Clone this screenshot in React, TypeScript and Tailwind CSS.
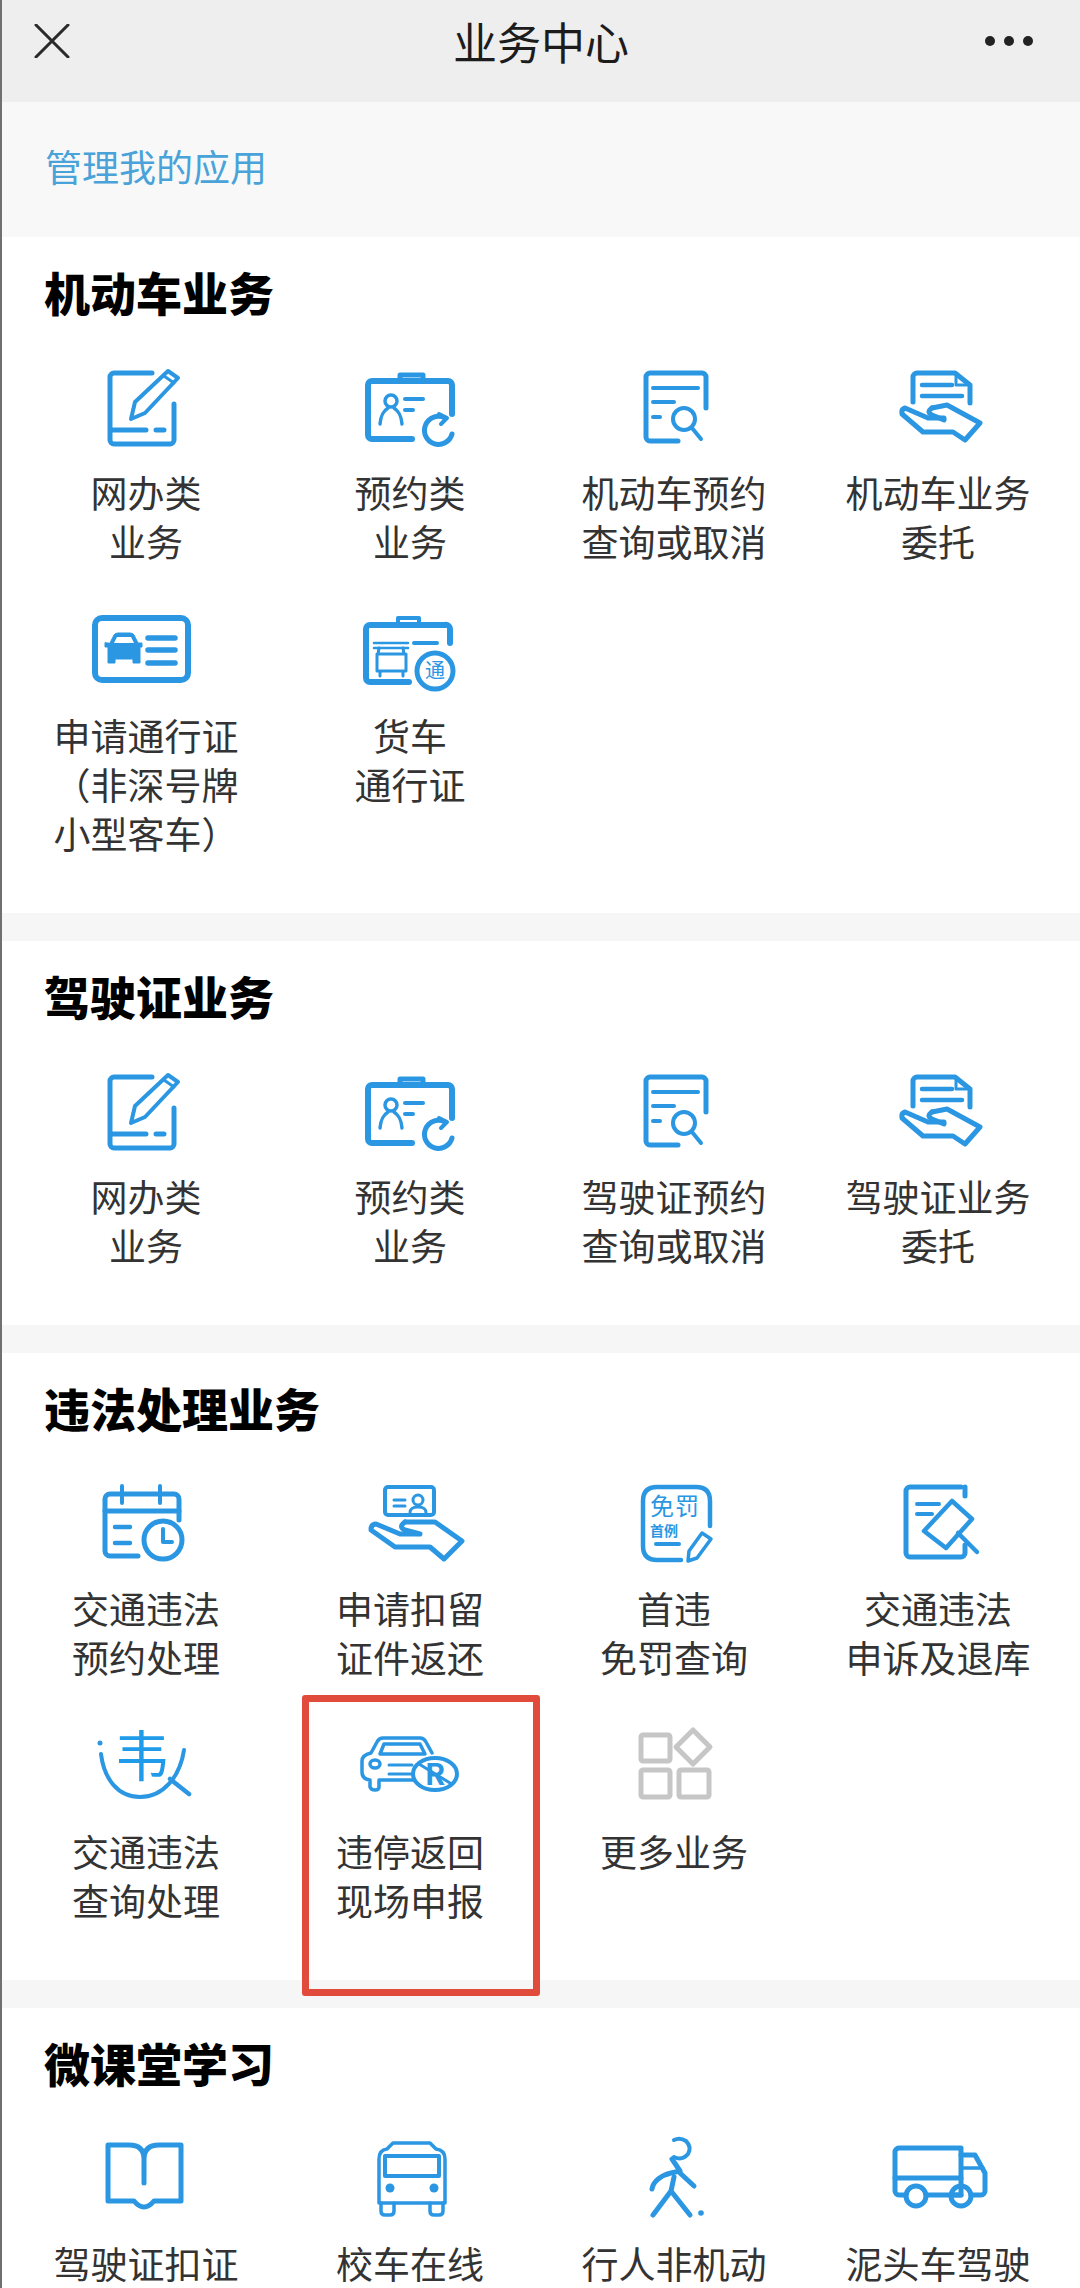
import React from "react";

const BLUE = "#2b97e3";

// shared wrapper for the service icons, all drawn on a 100 unit grid
const Ico = ({ children, color = BLUE, w = 5 }: { children: React.ReactNode; color?: string; w?: number }) => (
  <svg
    viewBox="0 0 100 100"
    className="w-[100px] h-[100px] overflow-visible"
    fill="none"
    stroke={color}
    strokeWidth={w}
    strokeLinecap="round"
    strokeLinejoin="round"
  >
    {children}
  </svg>
);

const TabletPen = () => (
  <Ico>
    <path d="M56 15H18a4 4 0 0 0-4 4V82a4 4 0 0 0 4 4H74a4 4 0 0 0 4-4V46" />
    <path d="M15 72H50M60 72H68" />
    <path d="M35 61L39 44 72 13 82 20 49 55Z" strokeWidth={4} />
    <path d="M68 18L78 25" strokeWidth={3} />
  </Ico>
);

const CardRefresh = () => (
  <Ico>
    <path d="M52 81H12a4 4 0 0 1-4-4V27a4 4 0 0 1 4-4H88a4 4 0 0 1 4 4V56" strokeWidth={6} />
    <path d="M40 20V17H63V20" strokeWidth={5} />
    <circle cx="31" cy="43" r="6" strokeWidth={3.5} />
    <path d="M20 66C21 55 25 52 28 50M42 66C41 55 37 52 34 50" strokeWidth={3.5} />
    <path d="M45 41H63M45 52H53" strokeWidth={4} />
    <path d="M85 60A14 14 0 1 0 92 76" />
    <path d="M79 56L87 60 81 66" strokeWidth={4} />
  </Ico>
);

const DocSearch = () => (
  <Ico>
    <path d="M54 83H26a4 4 0 0 1-4-4V19a4 4 0 0 1 4-4H78a4 4 0 0 1 4 4V50" />
    <path d="M29 30H74M29 44H50M29 59H36" strokeWidth={4} />
    <circle cx="60" cy="61" r="11" strokeWidth={4} />
    <path d="M68 70L77 81" strokeWidth={4} />
  </Ico>
);

const DocHand = () => (
  <Ico>
    <path d="M25 44V19a4 4 0 0 1 4-4H67L82 27V45" />
    <path d="M68 17V27H80" strokeWidth={3} />
    <path d="M34 27H64M34 38H74" strokeWidth={4.5} />
    <path d="M44 50L59 47 92 65 77 82 65 74H35L14 56Q13 51 17 50L40 60H56" />
    <path d="M44 50Q38 54 44 57L56 62" />
  </Ico>
);

const CarCard = () => (
  <Ico>
    <rect x="-1" y="17" width="93" height="62" rx="7" strokeWidth={6} />
    <path
      d="M14 42L18 34Q19 32 22 32H34Q37 32 38 34L42 42H46V46H44V62H37V58H19V62H12V46H9V42Z"
      fill={BLUE}
      strokeWidth={1}
    />
    <path d="M18 42L21 36H35L38 42Z" fill="#fff" stroke="none" />
    <path d="M52 37H79M52 49H79M52 62H79" strokeWidth={5.5} />
  </Ico>
);

const TruckPass = () => (
  <Ico>
    <path d="M49 81H10a4 4 0 0 1-4-4V28a4 4 0 0 1 4-4H85a4 4 0 0 1 5 4V42" strokeWidth={6} />
    <path d="M38 22V17H59V22" strokeWidth={4} />
    <path d="M14 42H48M14 47H48" strokeWidth={2.5} />
    <path d="M19 47L18 53H44L43 47M17 53V70H46V53M20 70V75M43 70V75" strokeWidth={3} />
    <path d="M54 42H77" strokeWidth={4} />
    <circle cx="75" cy="70" r="18" fill="#fff" strokeWidth={5} />
    <text x="75" y="77" fontSize="20" textAnchor="middle" fill={BLUE} stroke="none">
      通
    </text>
  </Ico>
);

const CalendarClock = () => (
  <Ico>
    <path d="M42 82H14a5 5 0 0 1-5-5V25a5 5 0 0 1 5-5H78a5 5 0 0 1 5 5V46" />
    <path d="M9 37H83" />
    <path d="M26 12V29M64 12V29" strokeWidth={4} />
    <path d="M19 53H34M19 69H34" strokeWidth={4.5} />
    <circle cx="67" cy="66" r="19" fill="#fff" />
    <path d="M67 55V68H76" strokeWidth={4} />
  </Ico>
);

const HandCard = () => (
  <Ico>
    <rect x="25" y="13" width="49" height="28" rx="3" strokeWidth={4} />
    <circle cx="58" cy="26" r="5" strokeWidth={3} />
    <path d="M50 39C50 34 53 33 58 33S66 34 66 39" strokeWidth={3} />
    <path d="M34 26H45M34 32H45" strokeWidth={3} />
    <path d="M45 48H75L102 67 84 85 70 73H35L11 56Q11 50 16 50L40 60H58" />
    <path d="M45 48Q38 53 45 56L60 60" />
  </Ico>
);

const FreeFine = () => (
  <Ico w={4.5}>
    <path d="M57 86H33Q19 86 19 72V27Q19 13 33 13H72Q86 13 86 27V52" />
    <path d="M32 70H55" strokeWidth={4} />
    <path d="M78 59L87 65 73 84 64 87 65 77Z" strokeWidth={3.5} />
    <text x="38" y="41" fontSize="24" textAnchor="middle" fill={BLUE} stroke="none">
      免
    </text>
    <text x="63" y="41" fontSize="24" textAnchor="middle" fill={BLUE} stroke="none">
      罚
    </text>
    <text x="40" y="62" fontSize="14" fontWeight="700" textAnchor="middle" fill={BLUE} stroke="none">
      首例
    </text>
  </Ico>
);

const DocFlag = () => (
  <Ico>
    <path d="M73 13H22a4 4 0 0 0-4 4V79a4 4 0 0 0 4 4H73a4 4 0 0 0 4-4V71" />
    <path d="M77 13V22" />
    <path d="M29 30H51M29 40H44" strokeWidth={4} />
    <path d="M64 27L36 57 58 74 84 45Z" strokeWidth={4.5} />
    <path d="M70 59L89 78" strokeWidth={4.5} />
  </Ico>
);

const WeiGlyph = () => (
  <Ico w={4}>
    <path d="M5 37C8 62 22 80 44 80 67 80 84 60 88 33" />
    <path d="M74 62L93 77" strokeWidth={4.5} />
    <circle cx="4" cy="26" r="2.5" fill={BLUE} stroke="none" />
    <text x="46" y="59" fontSize="55" textAnchor="middle" fill="#1f9bea" stroke="none">
      韦
    </text>
  </Ico>
);

const CarParking = () => (
  <Ico w={3.5}>
    <path d="M54 63H19V70Q19 73 15 73T10 70V63Q2 62 2 55V44Q2 38 11 36L17 25Q19 21 23 21H60Q64 21 66 25L72 36" />
    <path d="M20 37L24 27H60L65 37Z" />
    <ellipse cx="15" cy="47" rx="5" ry="4" />
    <path d="M29 48H52M29 57H52" strokeWidth={3} />
    <ellipse cx="75" cy="57" rx="22" ry="16" fill="#fff" strokeWidth={4} />
    <text x="75" y="68" fontSize="30" fontWeight="700" textAnchor="middle" fill={BLUE} stroke="none">
      R
    </text>
    <path d="M59 47L90 66" strokeWidth={3} />
  </Ico>
);

const MoreGrid = () => (
  <Ico color="#c6c6c6" w={5}>
    <rect x="17" y="18" width="29" height="26" rx="2" />
    <path d="M69 13L86 30 69 47 52 30Z" />
    <rect x="17" y="53" width="29" height="27" rx="2" />
    <rect x="55" y="53" width="30" height="27" rx="2" />
  </Ico>
);

const Book = () => (
  <Ico>
    <path d="M48 54V30Q48 16 33 16H12V72H38Q48 84 58 72H85V16H63Q48 16 48 30" />
  </Ico>
);

const Bus = () => (
  <Ico w={3.5}>
    <path d="M33 14H70L76 20Q85 21 85 30V74H19V30Q19 21 27 20Z" />
    <rect x="25" y="27" width="54" height="20" strokeWidth={4} />
    <circle cx="30" cy="59" r="4.5" fill={BLUE} stroke="none" />
    <circle cx="74" cy="59" r="4.5" fill={BLUE} stroke="none" />
    <path d="M21 74V82Q21 86 25 86H30Q34 86 34 82V74M70 74V82Q70 86 74 86H79Q83 86 83 82V74" />
  </Ico>
);

const Walker = () => (
  <Ico>
    <path d="M50 11Q56 8 62 12 68 18 64 25 58 32 50 28" strokeWidth={4} />
    <path d="M48 30L56 42 47 44C38 46 29 52 28 60" />
    <path d="M56 44L70 57" />
    <path d="M50 48L47 62 29 86" />
    <path d="M47 62L66 86" />
    <circle cx="77" cy="84" r="2.8" fill={BLUE} stroke="none" />
  </Ico>
);

const Truck = () => (
  <Ico>
    <path d="M18 66H11a4 4 0 0 1-4-4V23a4 4 0 0 1 4-4H73V66H38" />
    <path d="M7 49H73" />
    <path d="M73 26H87L97 44V62a4 4 0 0 1-4 4H83M63 66H73" />
    <path d="M74 39H95" strokeWidth={3.5} />
    <circle cx="28" cy="67" r="10" />
    <circle cx="73" cy="67" r="10" />
  </Ico>
);

type Item = { icon: React.ReactNode; lines: string[]; marked?: boolean };
type Section = { title: string; items: Item[] };

const sections: Section[] = [
  {
    title: "机动车业务",
    items: [
      { icon: <TabletPen />, lines: ["网办类", "业务"] },
      { icon: <CardRefresh />, lines: ["预约类", "业务"] },
      { icon: <DocSearch />, lines: ["机动车预约", "查询或取消"] },
      { icon: <DocHand />, lines: ["机动车业务", "委托"] },
      { icon: <CarCard />, lines: ["申请通行证", "（非深号牌", "小型客车）"] },
      { icon: <TruckPass />, lines: ["货车", "通行证"] },
    ],
  },
  {
    title: "驾驶证业务",
    items: [
      { icon: <TabletPen />, lines: ["网办类", "业务"] },
      { icon: <CardRefresh />, lines: ["预约类", "业务"] },
      { icon: <DocSearch />, lines: ["驾驶证预约", "查询或取消"] },
      { icon: <DocHand />, lines: ["驾驶证业务", "委托"] },
    ],
  },
  {
    title: "违法处理业务",
    items: [
      { icon: <CalendarClock />, lines: ["交通违法", "预约处理"] },
      { icon: <HandCard />, lines: ["申请扣留", "证件返还"] },
      { icon: <FreeFine />, lines: ["首违", "免罚查询"] },
      { icon: <DocFlag />, lines: ["交通违法", "申诉及退库"] },
      { icon: <WeiGlyph />, lines: ["交通违法", "查询处理"] },
      { icon: <CarParking />, lines: ["违停返回", "现场申报"], marked: true },
      { icon: <MoreGrid />, lines: ["更多业务"] },
    ],
  },
  {
    title: "微课堂学习",
    items: [
      { icon: <Book />, lines: ["驾驶证扣证"] },
      { icon: <Bus />, lines: ["校车在线"] },
      { icon: <Walker />, lines: ["行人非机动"] },
      { icon: <Truck />, lines: ["泥头车驾驶"] },
    ],
  },
];

export default function App() {
  return (
    <div className="w-[1080px] h-[2288px] overflow-hidden bg-[#f6f6f6] border-l-2 border-[#707070] font-['Noto_Sans_CJK_SC','Noto_Sans',sans-serif]">
      {/* top bar */}
      <div className="h-[102px] bg-[#eeeeee] grid grid-cols-[1fr_auto_1fr] items-center pb-[20px] px-[32px]">
        <svg viewBox="0 0 36 34" className="w-[36px] h-[34px]" stroke="#2a2a2a" strokeWidth="3" strokeLinecap="round">
          <path d="M2 1L34 33M34 1L2 33" />
        </svg>
        <div className="text-[44px] leading-[60px] text-[#1c1c1c]">业务中心</div>
        <div className="flex justify-end gap-[9px] pr-[15px]">
          <span className="w-[10px] h-[10px] rounded-full bg-[#222]" />
          <span className="w-[10px] h-[10px] rounded-full bg-[#222]" />
          <span className="w-[10px] h-[10px] rounded-full bg-[#222]" />
        </div>
      </div>

      <div className="h-[135px] bg-[#f8f8f8] flex items-center pl-[43px] pb-[6px] text-[37px] text-[#4aa3d8]">
        管理我的应用
      </div>

      <div className="flex flex-col gap-[28px]">
        {sections.map((s) => (
          <section key={s.title} className="bg-white pb-[20px]">
            <h2 className="pt-[24px] pb-[37px] pl-[42px] text-[46px] leading-[60px] font-black text-black">
              {s.title}
            </h2>
            <div className="grid grid-cols-[repeat(4,264px)] pl-[12px]">
              {s.items.map((item, i) => (
                <div key={i} className="relative pb-[35px] flex flex-col items-center">
                  <div className="h-[110px]">{item.icon}</div>
                  <div className="min-h-[98px] text-[37px] leading-[49px] text-[#333] text-center whitespace-nowrap">
                    {item.lines.map((l) => (
                      <div key={l}>{l}</div>
                    ))}
                  </div>
                  {item.marked && (
                    <div className="absolute -top-[22px] -bottom-[36px] left-[24px] right-[2px] border-[7px] border-[#e04b3c] rounded-[3px]" />
                  )}
                </div>
              ))}
            </div>
          </section>
        ))}
      </div>
    </div>
  );
}
